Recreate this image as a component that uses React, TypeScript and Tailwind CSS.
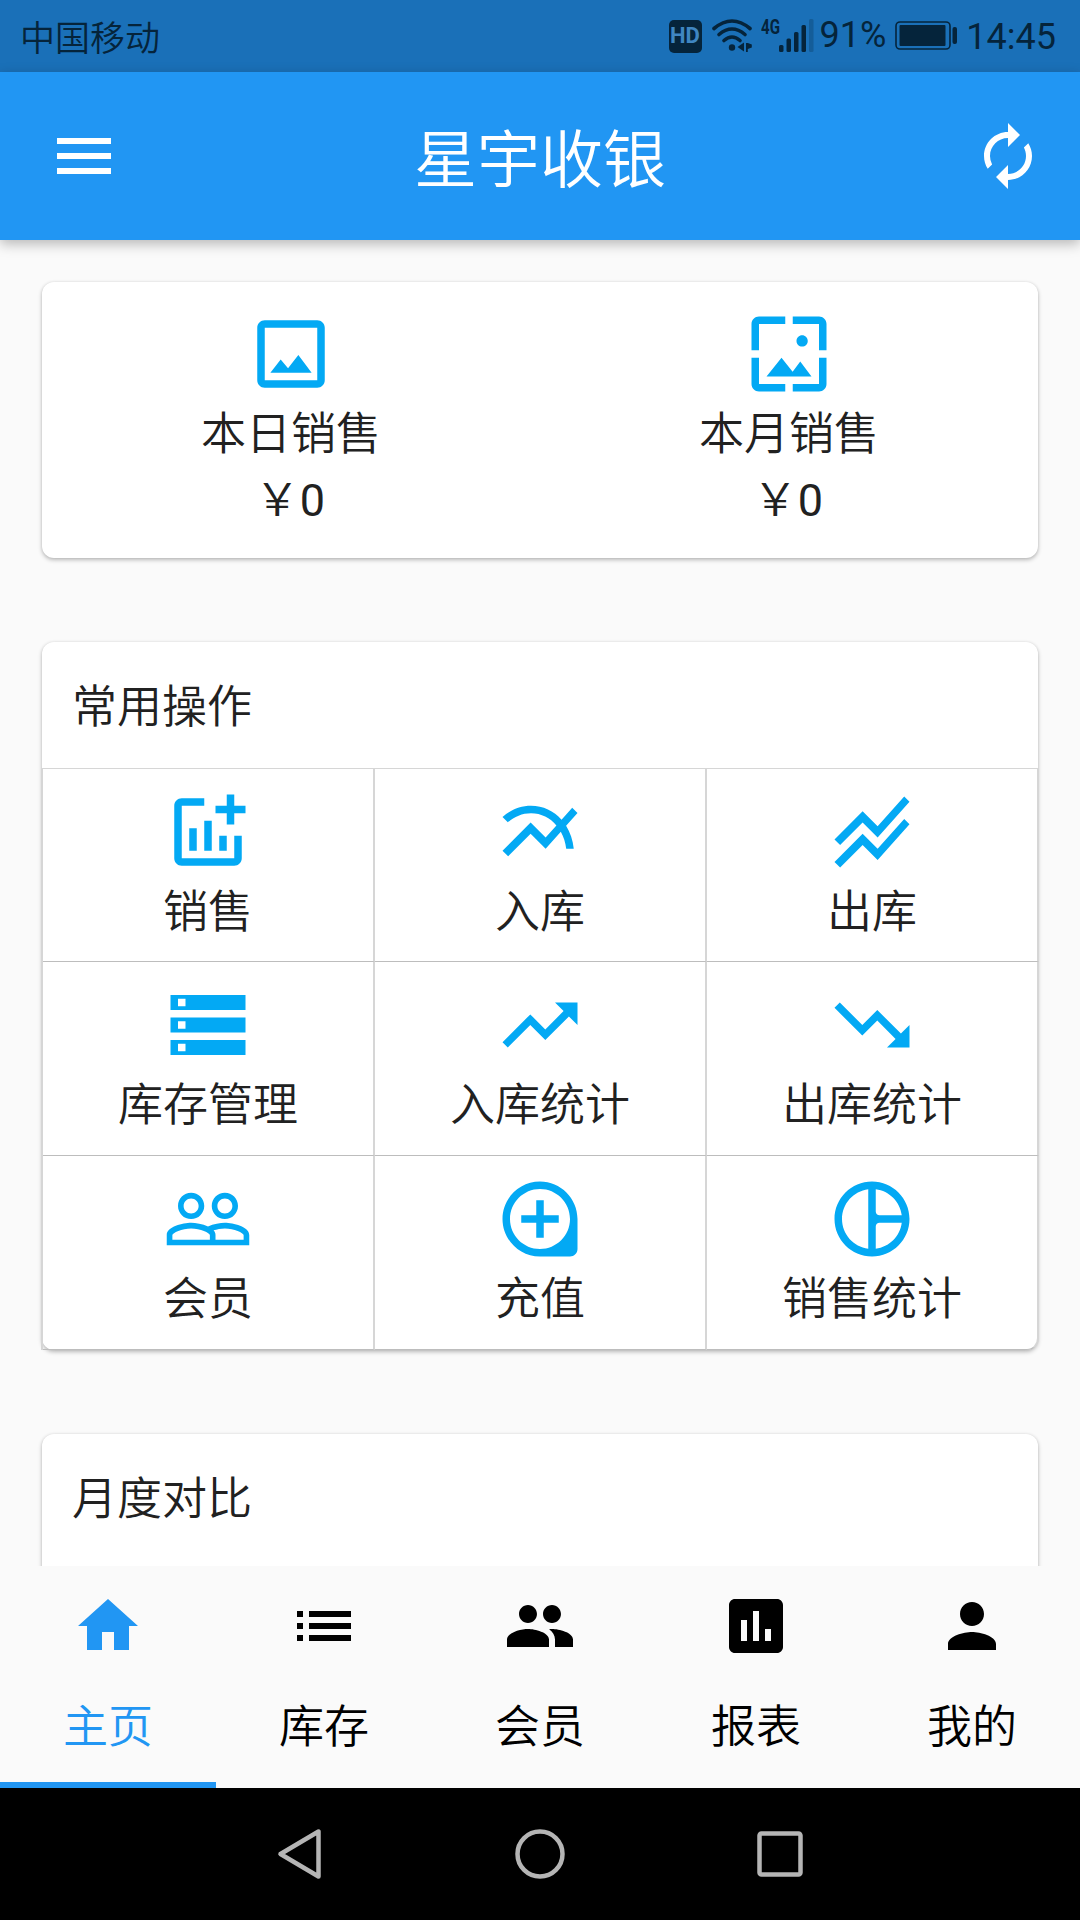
import type { ReactNode } from 'react';
import {
    MdAssessment,
    MdAutorenew,
    MdHome,
    MdList,
    MdLoupe,
    MdMenu,
    MdPeople,
    MdPerson,
    MdStackedLineChart,
    MdStorage,
    MdTrendingDown,
    MdTrendingUp,
    MdWallpaper,
} from 'react-icons/md';

function Glyph({ d }: { d: string }) {
    return (
        <svg width="90" height="90" viewBox="0 0 24 24" fill="currentColor" fillRule="evenodd">
            <path d={d}/>
        </svg>
    );
}

const photo = 'M5 3h14c1.1 0 2 .9 2 2v14c0 1.1-.9 2-2 2H5c-1.1 0-2-.9-2-2V5c0-1.1.9-2 2-2zm0 2v14h14V5zm8.96 7.29l-2.75 3.54-1.96-2.36L6.5 17h11z';
const addChart = 'M22 5v2h-3v3h-2V7h-3V5h3V2h2v3h3zm-3 14H5V5h6V3H5c-1.1 0-2 .9-2 2v14c0 1.1.9 2 2 2h14c1.1 0 2-.9 2-2v-6h-2v6zm-4-6v4h2v-4h-2zm-4 4h2V9h-2v8zm-2 0v-6H7v6h2z';
const multiline = 'M22 6.92l-1.41-1.41-2.85 3.21C15.68 6.4 12.83 5 9.61 5 6.72 5 4.07 6.16 2 8l1.42 1.42C5.12 7.93 7.27 7 9.61 7c2.74 0 5.09 1.26 6.77 3.24l-2.88 3.24-4-4L2 16.99l1.5 1.5 6-6.01 4 4 4.05-4.55c.75 1.35 1.25 2.9 1.44 4.55H21c-.22-2.3-.95-4.39-2.04-6.14L22 6.92z';
const members = 'M16.5 13c-1.2 0-3.07.34-4.5 1-1.43-.67-3.3-1-4.5-1C5.33 13 1 14.08 1 16.25V19h22v-2.75c0-2.17-4.33-3.25-6.5-3.25zm-4 4.5h-10v-1.25c0-.54 2.56-1.75 5-1.75s5 1.21 5 1.75v1.25zm9 0H14v-1.25c0-.46-.2-.86-.52-1.22.88-.3 1.96-.53 3.02-.53 2.44 0 5 1.21 5 1.75v1.25zM7.5 12C9.43 12 11 10.43 11 8.5S9.43 5 7.5 5 4 6.57 4 8.5 5.57 12 7.5 12zm0-5.5c1.1 0 2 .9 2 2s-.9 2-2 2-2-.9-2-2 .9-2 2-2zm9 5.5c1.93 0 3.5-1.57 3.5-3.5S18.43 5 16.5 5 13 6.57 13 8.5s1.57 3.5 3.5 3.5zm0-5.5c1.1 0 2 .9 2 2s-.9 2-2 2-2-.9-2-2 .9-2 2-2z';
const pie = 'M12 2C6.48 2 2 6.48 2 12s4.48 10 10 10 10-4.48 10-10S17.52 2 12 2zM11 19.93C7.06 19.43 4 16.07 4 12s3.06-7.43 7-7.93zM13 4.07c3.61.45 6.48 3.32 6.93 6.93H14c-.55 0-1-.45-1-1zM13 19.93V14c0-.55.45-1 1-1h5.93c-.45 3.61-3.32 6.48-6.93 6.93z';

const actions: { label: string; icon: ReactNode }[] = [
    { label: '销售', icon: <Glyph d={addChart}/> },
    { label: '入库', icon: <Glyph d={multiline}/> },
    { label: '出库', icon: <MdStackedLineChart size={90}/> },
    { label: '库存管理', icon: <MdStorage size={90}/> },
    { label: '入库统计', icon: <MdTrendingUp size={90}/> },
    { label: '出库统计', icon: <MdTrendingDown size={90}/> },
    { label: '会员', icon: <Glyph d={members}/> },
    { label: '充值', icon: <MdLoupe size={90}/> },
    { label: '销售统计', icon: <Glyph d={pie}/> },
];

const tabs = [
    { label: '主页', Icon: MdHome },
    { label: '库存', Icon: MdList },
    { label: '会员', Icon: MdPeople },
    { label: '报表', Icon: MdAssessment },
    { label: '我的', Icon: MdPerson },
];

function StatusBar() {
    return (
        <div className="flex h-[72px] shrink-0 items-center bg-[#1a70b8] pl-5 pr-[24px] text-[#05243b]">
            <span className="pt-[7px] text-[35px] leading-[65px]">中国移动</span>
            <div className="ml-auto flex h-full items-center font-normal">
                <div className="mr-[10px] flex h-[33px] w-[33px] items-center justify-center rounded-[5px] bg-[#05243b] text-[22px] font-bold leading-none text-[#3f86c2]">
                    HD
                </div>
                <svg width="40" height="34" viewBox="0 0 40 34" fill="none" stroke="currentColor" strokeWidth="3.6" strokeLinecap="round">
                    <path d="M2 9.500Q20 -5.500 38 9.500"/>
                    <path d="M7 15.500Q20 4.500 33 15.500"/>
                    <path d="M12 21.500Q20 14.500 28 21.500"/>
                    <circle cx="20" cy="28.500" r="3.200" fill="currentColor" stroke="none"/>
                    <path d="M32 23.500v9l-6.500-4.500z M34 24v9h1.800v-3l4-1.500v-3l-4-1.500z" fill="currentColor" stroke="none"/>
                </svg>
                <div className="relative ml-[9px] h-[36px] w-[54px]">
                    <span className="absolute -top-px left-0 origin-left scale-x-[0.72] text-[21px] font-bold leading-[20px]">4G</span>
                    <svg className="absolute inset-0" width="54" height="36" viewBox="0 0 54 36" fill="currentColor">
                        <rect x="18" y="27" width="4.500" height="7" rx="1.500"/>
                        <rect x="25.500" y="20.500" width="4.500" height="13.500" rx="1.500"/>
                        <rect x="33" y="14" width="4.500" height="20" rx="1.500"/>
                        <rect x="40.500" y="7" width="4.500" height="27" rx="1.500"/>
                        <rect x="48" y="1" width="4.500" height="33" rx="1.500" opacity="0.25"/>
                    </svg>
                </div>
                <span className="ml-[5px] pb-[3px] text-[36px] leading-none">91%</span>
                <svg className="ml-[9px]" width="62" height="30" viewBox="0 0 62 30">
                    <rect x="1" y="1" width="54" height="27" rx="4" fill="none" stroke="currentColor" strokeWidth="1.600"/>
                    <rect x="4.500" y="4" width="46" height="21" rx="1" fill="currentColor"/>
                    <rect x="57.500" y="6" width="4.500" height="17" rx="2" fill="currentColor"/>
                </svg>
                <span className="ml-[9px] pt-[2px] text-[36px] leading-none">14:45</span>
            </div>
        </div>
    );
}

function Summary({ icon, label }: { icon: ReactNode; label: string }) {
    return (
        <div className="flex flex-1 flex-col items-center pt-[27px] text-[45px] leading-[66px]">
            <div className="mb-[3px] text-[#03a9f4]">{icon}</div>
            <p>{label}</p>
            <p className="pr-[2px]">￥<span className="font-normal">0</span></p>
        </div>
    );
}

const card = 'bg-white shadow-[0_2px_4px_rgba(0,0,0,0.26),0_0_3px_rgba(0,0,0,0.08)]';

export default function App() {
    return (
        <div className="flex h-[1920px] w-[1080px] flex-col overflow-hidden bg-[#fafafa] font-[Roboto,'Noto_Sans_CJK_SC',sans-serif] font-[350] text-[#212121]">
            <StatusBar/>
            <header className="z-10 flex h-[168px] shrink-0 items-center justify-between bg-[#2196f3] pl-[48px] pr-[36px] text-white shadow-[0_4px_12px_rgba(0,0,0,0.27)]">
                <MdMenu size={72}/>
                <h1 className="pr-[12px] pt-[8px] text-[63px] leading-none">星宇收银</h1>
                <MdAutorenew size={72}/>
            </header>

            <main className="flex min-h-0 flex-1 flex-col gap-[84px] overflow-hidden px-[42px] pt-[42px]">
                <section className={`flex h-[276px] shrink-0 rounded-xl ${card}`}>
                    <Summary icon={<Glyph d={photo}/>} label="本日销售"/>
                    <Summary icon={<MdWallpaper size={90}/>} label="本月销售"/>
                </section>

                <section className={`flex h-[708px] shrink-0 flex-col rounded-xl ${card}`}>
                    <h2 className="h-[126px] px-[30px] pt-[3px] text-[45px] leading-[126px]">常用操作</h2>
                    <div className="-mx-px grid flex-1 grid-cols-3 grid-rows-[193px_194px_194px] border-l-2 border-t border-[#d6d6d6]">
                        {actions.map(({ label, icon }) => (
                            <div key={label} className="flex flex-col items-center border-b border-r-2 border-b-[#bdbdbd] border-r-[#d6d6d6] pt-[18px] last:rounded-br-xl">
                                <div className="text-[#03a9f4]">{icon}</div>
                                <p className="pt-px text-[45px] leading-[70px]">{label}</p>
                            </div>
                        ))}
                    </div>
                </section>

                <section className={`h-[300px] shrink-0 rounded-xl ${card}`}>
                    <h2 className="h-[126px] px-[30px] pt-[3px] text-[45px] leading-[126px]">月度对比</h2>
                </section>
            </main>

            <nav className="grid h-[222px] shrink-0 grid-cols-5 text-black">
                {tabs.map(({ label, Icon }, i) => (
                    <div
                        key={label}
                        className={`flex flex-col items-center border-b-[6px] pt-[24px] ${i === 0 ? 'border-[#2196f3] text-[#2196f3]' : 'border-transparent'}`}>
                        <Icon size={72}/>
                        <p className="mt-[33px] text-[45px] leading-[66px]">{label}</p>
                    </div>
                ))}
            </nav>

            {/* system navigation keys */}
            <div className="flex h-[132px] shrink-0 items-center justify-center gap-[180px] bg-black text-[#b5b5b5]">
                <svg width="60" height="60" viewBox="0 0 60 60" fill="none" stroke="currentColor" strokeWidth="4.500" strokeLinejoin="round">
                    <path d="M10.500 30L48.500 7.500v45z"/>
                </svg>
                <svg width="60" height="60" viewBox="0 0 60 60" fill="none" stroke="currentColor" strokeWidth="4.500">
                    <circle cx="30" cy="30" r="22.500"/>
                </svg>
                <svg width="60" height="60" viewBox="0 0 60 60" fill="none" stroke="currentColor" strokeWidth="4.500">
                    <rect x="9.500" y="9.500" width="41" height="41" rx="2"/>
                </svg>
            </div>
        </div>
    );
}
